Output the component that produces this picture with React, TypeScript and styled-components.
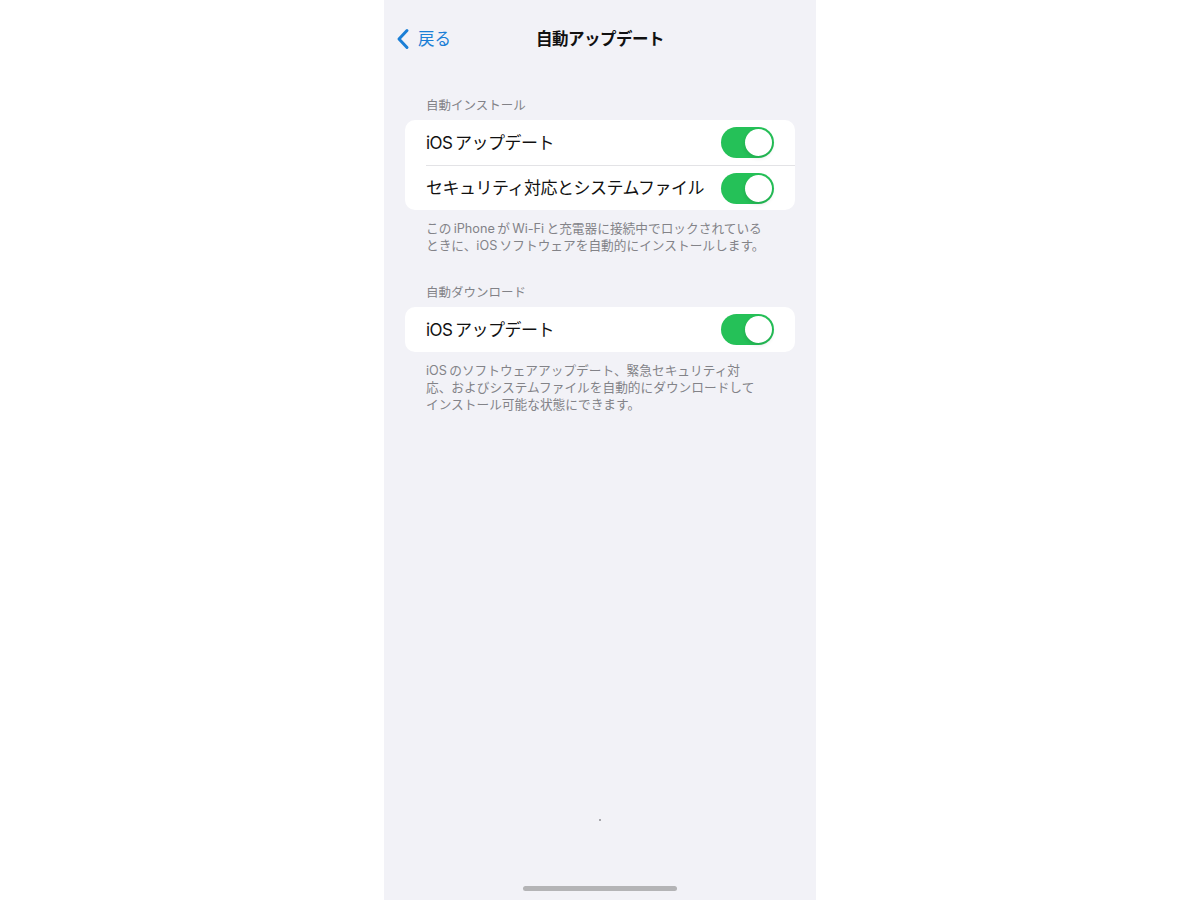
import React, { useState } from 'react';
import styled, { createGlobalStyle } from 'styled-components';

const GlobalStyle = createGlobalStyle`
  html, body {
    margin: 0;
    padding: 0;
    background: #ffffff;
  }
  * {
    box-sizing: border-box;
  }
`;

type ToggleRow = {
  key: string;
  label: string;
};

const installRows: ToggleRow[] = [
  { key: 'iosInstall', label: 'iOS\u2009アップデート' },
  { key: 'securityInstall', label: 'セキュリティ対応とシステムファイル' },
];

const downloadRows: ToggleRow[] = [{ key: 'iosDownload', label: 'iOS\u2009アップデート' }];

function App() {
  const [switches, setSwitches] = useState<Record<string, boolean>>({
    iosInstall: true,
    securityInstall: true,
    iosDownload: true,
  });

  const flip = (key: string) => {
    setSwitches({ ...switches, [key]: !switches[key] });
  };

  const renderRows = (rows: ToggleRow[]) =>
    rows.map((row, i) => (
      <Row key={row.key} $divider={i > 0}>
        <RowLabel>{row.label}</RowLabel>
        <Switch $on={switches[row.key]} onClick={() => flip(row.key)}>
          <Knob $on={switches[row.key]} />
        </Switch>
      </Row>
    ));

  return (
    <Page>
      <GlobalStyle />
      <Screen>
        <NavBar>
          <BackButton>
            <svg width='14' height='22' viewBox='0 0 14 22'>
              <polyline
                points='11,2.5 3,11 11,19.5'
                fill='none'
                stroke='#1b7fd6'
                strokeWidth='3'
                strokeLinecap='round'
                strokeLinejoin='round'
              />
            </svg>
            <BackText>戻る</BackText>
          </BackButton>
          <NavTitle>自動アップデート</NavTitle>
        </NavBar>

        <SectionHeader $first>自動インストール</SectionHeader>
        <Card>{renderRows(installRows)}</Card>
        <SectionFooter>
          この{'\u2009'}iPhone{'\u2009'}が{'\u2009'}Wi-Fi{'\u2009'}と充電器に接続中でロックされている
          <br />
          ときに、iOS{'\u2009'}ソフトウェアを自動的にインストールします。
        </SectionFooter>

        <SectionHeader>自動ダウンロード</SectionHeader>
        <Card>{renderRows(downloadRows)}</Card>
        <SectionFooter>
          iOS{'\u2009'}のソフトウェアアップデート、緊急セキュリティ対
          <br />
          応、およびシステムファイルを自動的にダウンロードして
          <br />
          インストール可能な状態にできます。
        </SectionFooter>

        <Spacer />
        <Dot />
        <HomeIndicator />
      </Screen>
    </Page>
  );
}

export default App;

const Page = styled.div`
  width: 100%;
  height: 900px;
  display: flex;
  justify-content: center;
  background: #ffffff;
  font-family: 'Inter', 'Noto Sans CJK JP', 'Noto Sans', sans-serif;
`;

const Screen = styled.div`
  width: 432px;
  height: 900px;
  background: #f2f2f7;
  display: flex;
  flex-direction: column;
  overflow: hidden;
`;

const NavBar = styled.div`
  position: relative;
  height: 78px;
  display: flex;
  align-items: center;
  justify-content: center;
`;

const BackButton = styled.div`
  position: absolute;
  left: 12px;
  top: 28px;
  display: flex;
  align-items: center;
  gap: 8px;
  cursor: pointer;
`;

const BackText = styled.span`
  color: #1b7fd6;
  font-size: 16.5px;
  line-height: 22px;
`;

const NavTitle = styled.div`
  color: #111111;
  font-size: 16.5px;
  font-weight: 700;
  letter-spacing: -0.5px;
  line-height: 22px;
`;

const SectionHeader = styled.div<{ $first?: boolean }>`
  margin: ${(p) => (p.$first ? '20px' : '31px')} 0 6px;
  padding: 0 42px;
  color: #828287;
  font-size: 12.5px;
  line-height: 16px;
`;

const Card = styled.div`
  margin: 0 21px;
  background: #ffffff;
  border-radius: 10px;
  overflow: hidden;
`;

const Row = styled.div<{ $divider: boolean }>`
  height: 45px;
  margin-left: 21px;
  padding-right: 21px;
  display: flex;
  align-items: center;
  justify-content: space-between;
  border-top: ${(p) => (p.$divider ? '1px solid #e3e3e6' : 'none')};
`;

const RowLabel = styled.span`
  color: #111111;
  font-size: 17px;
  letter-spacing: -0.5px;
  line-height: 22px;
`;

const Switch = styled.div<{ $on: boolean }>`
  position: relative;
  width: 53px;
  height: 31px;
  border-radius: 16px;
  background: ${(p) => (p.$on ? '#25c158' : '#e5e5ea')};
  cursor: pointer;
  flex-shrink: 0;
`;

const Knob = styled.div<{ $on: boolean }>`
  position: absolute;
  top: 2px;
  left: ${(p) => (p.$on ? '24px' : '2px')};
  width: 27px;
  height: 27px;
  border-radius: 50%;
  background: #ffffff;
  box-shadow: 0 2px 4px rgba(0, 0, 0, 0.12);
`;

const SectionFooter = styled.div`
  margin-top: 10px;
  padding: 0 42px;
  color: #838388;
  font-size: 12.7px;
  line-height: 17px;
  white-space: nowrap;
`;

const Spacer = styled.div`
  flex: 1;
`;

const Dot = styled.div`
  align-self: center;
  width: 2px;
  height: 2px;
  border-radius: 1px;
  background: #8e8e93;
  margin-bottom: 65px;
`;

const HomeIndicator = styled.div`
  align-self: center;
  width: 154px;
  height: 5px;
  border-radius: 3px;
  background: #b4b4b6;
  margin-bottom: 9px;
`;
